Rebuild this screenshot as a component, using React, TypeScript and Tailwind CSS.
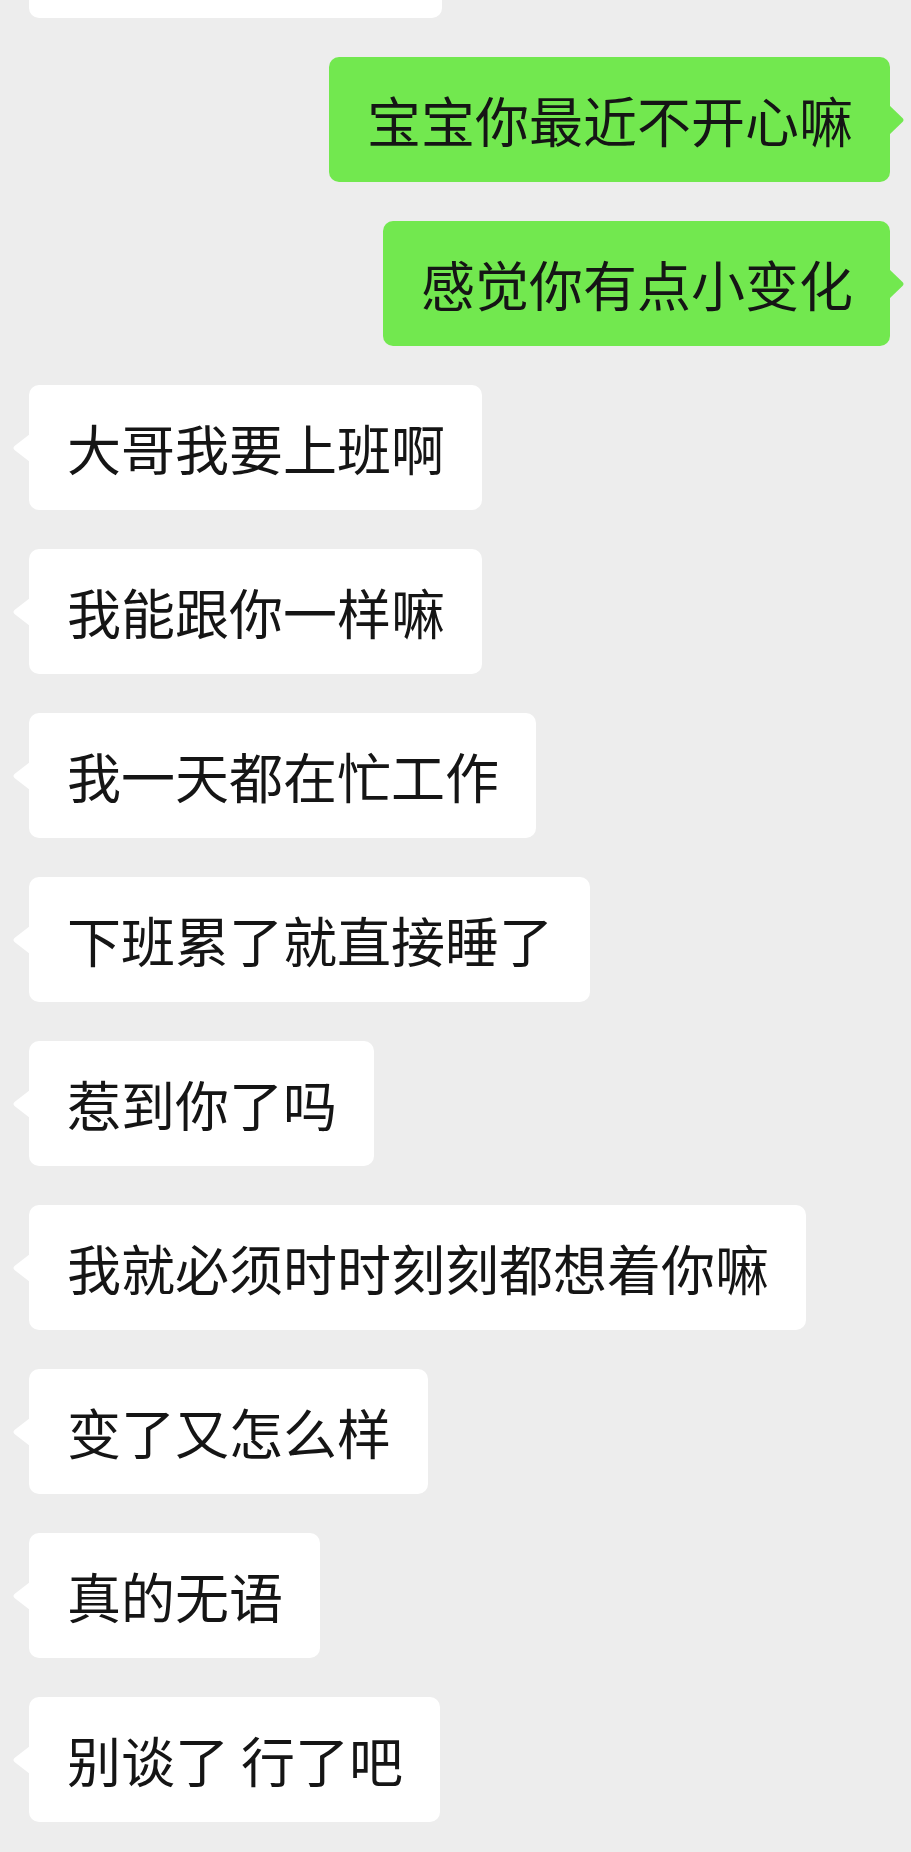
import React from 'react';

type Message = { text: string; mine?: boolean };

const messages: Message[] = [
  { text: '宝宝你最近不开心嘛', mine: true },
  { text: '感觉你有点小变化', mine: true },
  { text: '大哥我要上班啊' },
  { text: '我能跟你一样嘛' },
  { text: '我一天都在忙工作' },
  { text: '下班累了就直接睡了' },
  { text: '惹到你了吗' },
  { text: '我就必须时时刻刻都想着你嘛' },
  { text: '变了又怎么样' },
  { text: '真的无语' },
  { text: '别谈了 行了吧' },
];

function Tail({ mine }: { mine?: boolean }) {
  if (mine) {
    return (
      <svg
        className="absolute top-1/2 -right-[15px] -translate-y-1/2"
        width="16"
        height="30"
        viewBox="0 0 16 30"
      >
        <path d="M0 0 L13.5 13 Q15.5 15 13.5 17 L0 30 Z" fill="#72e84f" />
      </svg>
    );
  }
  return (
    <svg
      className="absolute top-1/2 -left-[17px] -translate-y-1/2"
      width="18"
      height="28"
      viewBox="0 0 18 28"
    >
      <path d="M18 0 L2.5 12 Q0.5 14 2.5 16 L18 28 Z" fill="#ffffff" />
    </svg>
  );
}

function Bubble({ text, mine }: Message) {
  return (
    <div className={mine ? 'flex justify-end pr-[21px]' : 'flex justify-start pl-[29px]'}>
      <div
        className={
          'relative flex h-[125px] items-center whitespace-pre rounded-[10px] pl-[38px] pr-[37px] text-[54px] leading-none text-[#151515] ' +
          (mine ? 'bg-[#72e84f]' : 'bg-white')
        }
      >
        {text}
        <Tail mine={mine} />
      </div>
    </div>
  );
}

export default function App() {
  return (
    <div
      className="min-h-[1852px] w-[911px] overflow-hidden bg-[#ededed]"
      style={{ fontFamily: '"Noto Sans CJK SC", "Noto Sans", sans-serif' }}
    >
      <div className="pl-[29px]">
        <div className="h-[18px] w-[413px] rounded-b-[10px] bg-white" />
      </div>
      <div className="flex flex-col gap-[39px] pt-[39px]">
        {messages.map((m, i) => (
          <Bubble key={i} text={m.text} mine={m.mine} />
        ))}
      </div>
    </div>
  );
}
